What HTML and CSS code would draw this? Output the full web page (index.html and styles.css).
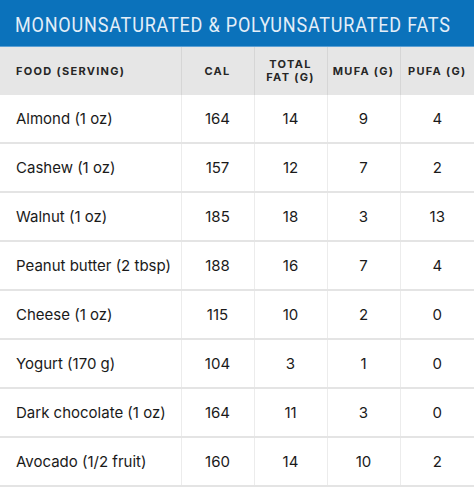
FILE: index.html
```html
<!DOCTYPE html>
<html>
<head>
<meta charset="utf-8">
<link rel="stylesheet" href="styles.css">
</head>
<body>
<div class="title"><span class="title-text">MONOUNSATURATED &amp; POLYUNSATURATED FATS</span></div>
<table class="fats">
  <colgroup>
    <col class="c-food">
    <col class="c-num">
    <col class="c-num">
    <col class="c-num">
    <col class="c-last">
  </colgroup>
  <thead>
    <tr>
      <th class="food">FOOD (SERVING)</th>
      <th>CAL</th>
      <th>TOTAL<br>FAT (G)</th>
      <th>MUFA (G)</th>
      <th>PUFA (G)</th>
    </tr>
  </thead>
  <tbody>
    <tr><td class="food">Almond (1 oz)</td><td>164</td><td>14</td><td>9</td><td>4</td></tr>
    <tr><td class="food">Cashew (1 oz)</td><td>157</td><td>12</td><td>7</td><td>2</td></tr>
    <tr><td class="food">Walnut (1 oz)</td><td>185</td><td>18</td><td>3</td><td>13</td></tr>
    <tr><td class="food">Peanut butter (2 tbsp)</td><td>188</td><td>16</td><td>7</td><td>4</td></tr>
    <tr><td class="food">Cheese (1 oz)</td><td>115</td><td>10</td><td>2</td><td>0</td></tr>
    <tr><td class="food">Yogurt (170 g)</td><td>104</td><td>3</td><td>1</td><td>0</td></tr>
    <tr><td class="food">Dark chocolate (1 oz)</td><td>164</td><td>11</td><td>3</td><td>0</td></tr>
    <tr><td class="food">Avocado (1/2 fruit)</td><td>160</td><td>14</td><td>10</td><td>2</td></tr>
  </tbody>
</table>
</body>
</html>
```
FILE: styles.css
```css
html, body {
  margin: 0;
  padding: 0;
  background: #ffffff;
}
body {
  width: 474px;
  font-family: Inter, "Liberation Sans", sans-serif;
  color: #1a1a1a;
}
.title {
  height: 47px;
  background: #0b72bb;
  border-bottom: 1px solid #5b9fd3;
  color: #e3eef8;
  font-family: Roboto, "Liberation Sans", sans-serif;
  font-size: 20px;
  line-height: 46px;
  padding: 2px 0 0 15px;
  white-space: nowrap;
  box-sizing: border-box;
  overflow: hidden;
}
.title-text {
  display: inline-block;
  letter-spacing: 0.9px;
  transform: scaleX(0.9);
  transform-origin: left center;
}
.fats {
  width: 474px;
  border-collapse: collapse;
  table-layout: fixed;
}
.c-food { width: 181px; }
.c-num { width: 73px; }
.c-last { width: 74px; }
.fats th {
  height: 48px;
  background: #e6e6e6;
  font-size: 11px;
  font-weight: 700;
  letter-spacing: 1.3px;
  line-height: 13px;
  color: #262626;
  text-align: center;
  padding: 0;
  border-left: 1px solid #d6d6d6;
  white-space: nowrap;
}
.fats td {
  height: 47px;
  font-size: 15px;
  text-align: center;
  padding: 0;
  border-left: 1px solid #ececec;
  border-bottom: 2px solid #e4e4e4;
}
.fats .food {
  text-align: left;
  padding-left: 16px;
  border-left: none;
}
```
